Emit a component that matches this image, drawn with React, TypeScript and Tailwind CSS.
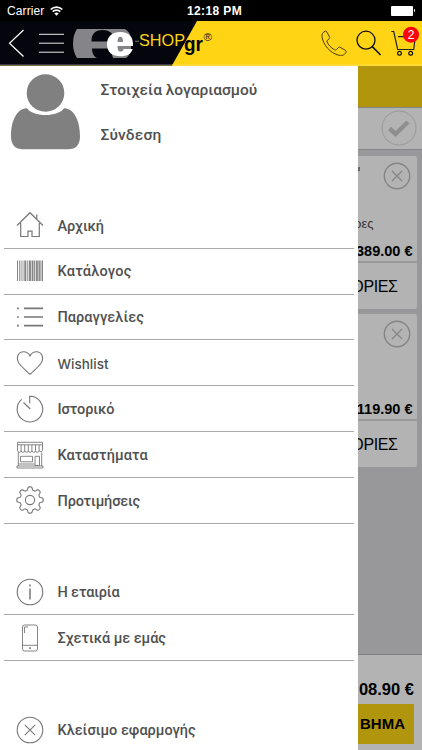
import type { ReactNode } from "react";

const greek = "font-['Roboto','Noto_Sans',sans-serif]";
const helv = "font-['Liberation_Sans',sans-serif]";

function Line({ children, w = 1.1 }: { children: ReactNode; w?: number }) {
  return (
    <svg width="28" height="28" viewBox="0 0 28 28" fill="none" stroke="#777" strokeWidth={w} className="shrink-0">
      {children}
    </svg>
  );
}

const HomeIcon = () => (
  <Line w={1.2}>
    <path d="M1 14.500 14 1.700 27 14.500M4.700 12V25.500H12v-5.400h4v5.400h7.300V12M20.800 7.700V3.600" />
  </Line>
);

const bars: [number, number][] = [
  [1, 1], [3, 0.8], [4.7, 0.8], [6.6, 0.8], [8.3, 2], [11.3, 1], [13, 1.9], [15.6, 1.9], [18.1, 1], [19.8, 2], [22.4, 1.5], [24.4, 0.8], [25.7, 1.3],
];
const BarcodeIcon = () => (
  <Line>
    <g fill="#858585" stroke="none">
      {bars.map(([x, w]) => (
        <rect key={x} x={x} y="3.5" width={w} height="20.5" />
      ))}
    </g>
  </Line>
);

const ListIcon = () => (
  <Line w={1.7}>
    <path d="M8 5.3h19M8 14h19M8 22.7h19M1 5.3h1.800M1 14h1.800M1 22.7h1.800" />
  </Line>
);

const HeartIcon = () => (
  <Line>
    <path d="M14 25.300C10 21.500 6 18.500 3 14.300C-.6 8.500 2.500 2.700 7.500 2.700c3 0 5.300 1.600 6.500 4.300C15.200 4.300 17.500 2.700 20.500 2.700c5 0 8.100 5.800 4.500 11.600C22 18.500 18 21.500 14 25.300Z" />
  </Line>
);

const TimerIcon = () => (
  <Line>
    <path d="M13.700 8.300V1.300A12.800 12.800 0 1 1 5.700 4.300M7.500 7.500l6.800 6.500" />
  </Line>
);

const StoreIcon = () => (
  <Line w={0.9}>
    <path d="M1.500 1.300h25v2.500h-25zM1.500 3.800V9.500a1.800 1.800 0 0 0 3.600 0 1.800 1.800 0 0 0 3.600 0 1.800 1.800 0 0 0 3.600 0 1.800 1.800 0 0 0 3.600 0 1.800 1.800 0 0 0 3.600 0 1.800 1.800 0 0 0 3.600 0 1.800 1.800 0 0 0 3.400 0V3.800M5.100 3.800v5.700M8.700 3.800v5.700M12.300 3.800v5.700M15.900 3.800v5.700M19.500 3.800v5.700M23.100 3.800v5.700M2.300 11.500v13.500M25.700 11.500v13.500M1 25h26v2H1zM4.500 15.300h12v5.500h-12zM19 15.300h4.500v9.200H19zM2.500 23h16" />
  </Line>
);

const gearPoints = (() => {
  const pts: string[] = [];
  for (let i = 0; i <= 160; i++) {
    const a = (i / 160) * Math.PI * 2;
    const r = 11.6 + 1.6 * Math.tanh(2.2 * Math.cos(8 * a));
    pts.push(`${(14 + r * Math.sin(a)).toFixed(2)},${(14 - r * Math.cos(a)).toFixed(2)}`);
  }
  return pts.join(" ");
})();
const GearIcon = () => (
  <Line>
    <polygon points={gearPoints} strokeLinejoin="round" />
    <circle cx="14" cy="14" r="4.600" />
  </Line>
);

const InfoIcon = () => (
  <Line>
    <circle cx="14" cy="14" r="12.800" />
    <path d="M14 10.500v11M14 6.500v2" strokeWidth="1.500" />
  </Line>
);

const PhoneIcon = () => (
  <Line w={0.9}>
    <rect x="6.500" y="1" width="15" height="26" rx="2" />
    <path d="M6.500 21.300h15M8.500 9V3h3.500" />
    <circle cx="14" cy="24.100" r=".6" fill="#777" />
  </Line>
);

const CrossIcon = () => (
  <Line>
    <circle cx="14" cy="14" r="12.800" />
    <path d="m8.800 8.800 10.400 10.400M19.200 8.800 8.800 19.200" />
  </Line>
);

function Row({ icon, label, line = true, text = "text-[14.5px]", font = greek }: { icon: ReactNode; label: string; line?: boolean; text?: string; font?: string }) {
  return (
    <div className={`ml-[4px] mr-[4px] flex h-[45.83px] items-center pl-[12px] border-b ${line ? "border-[#a9a9a9]" : "border-transparent"}`}>
      {icon}
      <span className={`ml-[13.5px] whitespace-nowrap pt-[2px] font-medium text-[#505050] ${font} ${text}`}>{label}</span>
    </div>
  );
}

function Header() {
  return (
    <header className="flex h-[44.5px] shrink-0 bg-[#ffd414]">
      <svg width="422" height="44.500" viewBox="0 21 422 44.500" fill="none">
        <path d="M0 21H197L172 65.500H0Z" fill="#05050d" />
        <path d="M0 65H172" stroke="#77777c" />
        <path d="M172 65H422" stroke="#ffe050" />
        <path d="M23.500 30 9.500 43.200 23.500 56.500" stroke="#fff" strokeWidth="1.200" />
        <path d="M39 34.300h25M39 43.200h25M39 52.200h25" stroke="#e8e8e8" />
        <path d="M77 29h48q5 3 6 9v12q-1 5-5 8H77q-4-6-4-14.500T77 29Z" fill="#858589" />
        <path d="M91.500 41.500C91.500 34 95 30 102.500 30c6 0 11 3 12 9l-4 2.500ZM92 48.500h18l3 9.500H97c-3-1-5-5-5-9.500Z" fill="#05050d" />
        <path fillRule="evenodd" d="M133 46h-15.500c0 4 1 5.600 3 5.600 1.700 0 2.700-1 3.200-2.600h9c-1.500 5-5.700 7.300-12.200 7.300-8.500 0-13.500-4.300-13.500-12S112 32 120.500 32C129 32 133.500 37 133 46Zm-10-4c0-3.600-.7-5.200-2.600-5.200S117.600 38.500 117.500 42Z" fill="#fff" />
        <path d="M135 41.300h4" stroke="#999" strokeWidth=".8" />
        <text x="139" y="46.300" fontSize="17" textLength="46" lengthAdjust="spacingAndGlyphs" fill="#ffd414" className={helv}>SHOP</text>
        <text x="184" y="51" fontSize="21" fontWeight="bold" textLength="19" lengthAdjust="spacingAndGlyphs" fill="#05050d" className={helv}>gr</text>
        <text x="203.500" y="40.500" fontSize="11.500" fill="#222" className={helv}>®</text>
        <path d="M325 31.300c-2.200 1-3.500 3.200-2.900 6 1.500 8 7.700 15.200 15.900 17.700 3.300 1 6.500.5 8-2.700.4-.8.300-1.300-.4-1.800l-5.400-3.200c-.7-.4-1.300-.3-1.800.3l-2 2c-.7.600-1.300.500-2 .1-3.500-2-6-4.600-7.300-7.700-.3-.7-.2-1.300.4-1.800l1.700-1.500c.6-.5.700-1 .3-1.700l-2.700-5.200c-.4-.7-1-.900-1.800-.5Z" stroke="#443b10" />
        <circle cx="366" cy="40.200" r="9" stroke="#111" strokeWidth="1.300" />
        <path d="m372.300 46.600 8.300 8.400" stroke="#111" strokeWidth="1.500" />
        <path d="M391.300 31.500h2.400l4 18h16l1.300-10M398 36.700h6" stroke="#222" strokeWidth="1.200" />
        <circle cx="399.500" cy="53.300" r="1.900" stroke="#111" strokeWidth="1.200" />
        <circle cx="410.700" cy="53.300" r="1.900" stroke="#111" strokeWidth="1.200" />
        <circle cx="411" cy="34.700" r="8" fill="#f8060b" />
        <text x="411" y="39" textAnchor="middle" fontSize="12" fill="#fff" className={helv}>2</text>
      </svg>
    </header>
  );
}

function Card({ price, note, mark }: { price: string; note?: string; mark?: boolean }) {
  return (
    <div className={`flex w-[58.5px] flex-col rounded-r-[2px] bg-[#b3b3b3] ${helv}`}>
      <div className="flex h-[105px] flex-col">
        <div className="flex h-[40px] justify-between">
          <span className={`mt-[11px] h-[4px] w-[2px] ${mark ? "bg-[#666]" : ""}`} />
          <svg width="28" height="28" viewBox="0 0 28 28" fill="none" stroke="#858585" strokeWidth="1.400" className="mr-[6px] mt-[6px]">
            <circle cx="14" cy="14" r="12.700" />
            <path d="m9 9 10 10M19 9 9 19" strokeWidth="1.200" />
          </svg>
        </div>
        <div className="flex h-[42px] justify-end pr-[43px] pt-[20px] text-[13px] leading-[16px] text-[#333]">{note}</div>
        <div className="flex h-[23px] items-end justify-end whitespace-nowrap pr-[4px] text-[14.5px] leading-[20px] font-bold text-black">{price}</div>
      </div>
      <div className="h-[2px] bg-[#98989b]" />
      <div className="flex h-[46px] items-center justify-end pr-[19px] pt-[2px] text-[16px] tracking-[-0.4px] text-black">ΟΡΙΕΣ</div>
    </div>
  );
}

export default function App() {
  return (
    <div className="flex h-[750px] w-[422px] flex-col overflow-hidden bg-white">
      <div className={`grid h-[21px] shrink-0 grid-cols-3 items-center bg-black px-[7px] text-[12px] text-white ${helv}`}>
        <div className="flex items-center gap-[6px]">
          <span className="tracking-[0.1px]">Carrier</span>
          <svg width="13" height="10" viewBox="0 0 13 10" fill="none" stroke="#fff" strokeWidth="1.700">
            <path d="M.7 3.500a8.300 8.300 0 0 1 11.600 0M2.700 5.700a5.400 5.400 0 0 1 7.600 0" />
            <path d="M6.500 9.700 4.400 7.500a3 3 0 0 1 4.200 0Z" fill="#fff" stroke="none" />
          </svg>
        </div>
        <span className="whitespace-nowrap pl-[7px] text-center font-bold tracking-[0.4px]">12:18 PM</span>
        <div className="flex items-center justify-end">
          <span className="h-[10px] w-[22.5px] rounded-[1px] bg-white" />
          <span className="ml-[0.5px] h-[3px] w-[1.5px] rounded-r-full bg-white" />
        </div>
      </div>
      <Header />
      <div className="flex min-h-0 flex-1">
        <nav className="z-10 flex w-[358px] shrink-0 flex-col overflow-hidden bg-white">
          <div className="flex h-[137.5px] shrink-0">
            <svg width="92" height="90" viewBox="0 0 92 90" fill="#808080" className="shrink-0">
              <circle cx="45.500" cy="27" r="18.800" />
              <path d="M27 42.300c5.500 9 31.500 9 37 0 8.500 0 16 10 16 28 0 8.500-4 13-12 13H23c-8 0-12-4.500-12-13 0-18 7.500-28 16-28Z" />
            </svg>
            <div className={`flex flex-col pl-[8.5px] pt-[13.5px] text-[15.5px] font-medium leading-[22px] text-[#505050] ${greek}`}>
              <span className="whitespace-nowrap">Στοιχεία λογαριασμού</span>
              <span className="mt-[22.5px] tracking-[0.15px]">Σύνδεση</span>
            </div>
          </div>
          <div className="flex shrink-0 flex-col">
            <Row icon={<HomeIcon />} label="Αρχική" text="text-[14.5px] tracking-[-0.1px]" />
            <Row icon={<BarcodeIcon />} label="Κατάλογος" text="text-[14.5px] tracking-[0.25px]" />
            <Row icon={<ListIcon />} label="Παραγγελίες" text="text-[14.5px] tracking-[0.05px]" />
            <Row icon={<HeartIcon />} label="Wishlist" text="text-[13.5px]" font="font-['Inter',sans-serif]" />
            <Row icon={<TimerIcon />} label="Ιστορικό" text="text-[14.5px] tracking-[-0.1px]" />
            <Row icon={<StoreIcon />} label="Καταστήματα" text="text-[14.5px] tracking-[0.1px]" />
            <Row icon={<GearIcon />} label="Προτιμήσεις" text="text-[14.5px] tracking-[-0.15px]" />
          </div>
          <div className="mt-[45.83px] flex shrink-0 flex-col">
            <Row icon={<InfoIcon />} label="Η εταιρία" text="text-[14.5px] tracking-[-0.15px]" />
            <Row icon={<PhoneIcon />} label="Σχετικά με εμάς" text="text-[14.5px] tracking-[-0.05px]" />
          </div>
          <div className="mt-[45.83px] shrink-0">
            <Row icon={<CrossIcon />} label="Κλείσιμο εφαρμογής" line={false} />
          </div>
        </nav>
        <main className="flex w-[64px] flex-col bg-[#98989b]">
          <div className="h-[41px] shrink-0 bg-[#b1950d]" />
          <div className="flex h-[43px] shrink-0 items-center justify-end border-y border-[#858588] bg-[#b3b3b3] pr-[5px]">
            <svg width="36" height="36" viewBox="0 0 36 36" fill="none">
              <circle cx="18" cy="18" r="17" stroke="#999" />
              <path d="m8.500 18.500 6 5.500L27 12" stroke="#8f8f8f" strokeWidth="4.500" />
            </svg>
          </div>
          <div className="mt-[6.5px] flex shrink-0 flex-col gap-[5px]">
            <Card price="389.00 €" note="ρες" mark />
            <Card price="119.90 €" />
          </div>
          <div className={`mt-auto flex h-[96px] shrink-0 flex-col border-t border-[#808083] bg-[#b3b3b3] ${helv}`}>
            <div className="flex h-[49px] items-end justify-end whitespace-nowrap pb-[2px] pr-[8px] text-[16.5px] font-bold text-black">08.90 €</div>
            <div className="flex h-[40px] w-[56px] items-center justify-end bg-[#b1950d] pr-[9px] text-[15px] font-bold text-black">ΒΗΜΑ</div>
          </div>
        </main>
      </div>
    </div>
  );
}
